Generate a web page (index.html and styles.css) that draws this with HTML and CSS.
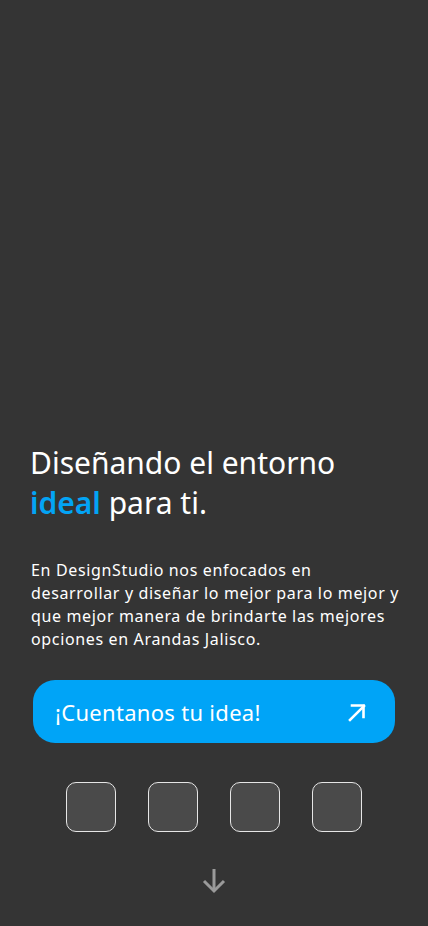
FILE: index.html
```html
<!DOCTYPE html>
<html lang="es">
<head>
<meta charset="utf-8">
<title>DesignStudio</title>
<link rel="stylesheet" href="styles.css">
</head>
<body>
<main class="hero">
  <h1 class="title">Diseñando el entorno<br><span class="accent">ideal</span> para ti.</h1>
  <p class="lead">En DesignStudio nos enfocados en desarrollar y diseñar lo mejor para lo mejor y que mejor manera de brindarte las mejores opciones en Arandas Jalisco.</p>
  <a class="cta" href="#">
    <span>¡Cuentanos tu idea!</span>
    <svg class="cta-icon" width="20" height="20" viewBox="0 0 20 20" fill="none" stroke="#fff" stroke-width="2.6" stroke-linecap="square">
      <path d="M3 18 L17 4"/>
      <path d="M5 3.5 H16.5 V15"/>
    </svg>
  </a>
  <div class="tiles">
    <div class="tile"></div>
    <div class="tile"></div>
    <div class="tile"></div>
    <div class="tile"></div>
  </div>
  <div class="scroll">
    <svg width="24" height="26" viewBox="0 0 24 26" fill="none" stroke="#9a9a9a" stroke-width="3">
      <path d="M12 1 V23"/>
      <path d="M2 13 L12 23 L22 13"/>
    </svg>
  </div>
</main>
</body>
</html>
```
FILE: styles.css
```css
html, body {
  margin: 0;
  padding: 0;
  background: #343434;
}
body {
  font-family: "Noto Sans", "DejaVu Sans", sans-serif;
  color: #fff;
}
.hero {
  height: 926px;
  box-sizing: border-box;
  display: flex;
  flex-direction: column;
  justify-content: flex-end;
  padding: 0 33px 32px 33px;
}
.title {
  margin: 0 0 0 -3px;
  font-size: 30px;
  font-weight: 400;
  line-height: 40px;
  letter-spacing: 0;
}
.accent {
  color: #03a4f5;
  font-weight: 600;
}
.lead {
  margin: 36px -6px 0 -2px;
  font-size: 16px;
  line-height: 23px;
  letter-spacing: 0.65px;
}
.cta {
  margin-top: 29px;
  height: 63px;
  border-radius: 22px;
  background: #00a4f7;
  display: flex;
  align-items: center;
  justify-content: space-between;
  padding: 0 28px 0 22px;
  text-decoration: none;
  color: #fff;
  font-size: 22px;
  letter-spacing: 0.3px;
}
.cta-icon {
  display: block;
}
.tiles {
  margin-top: 39px;
  display: flex;
  justify-content: center;
  gap: 32px;
}
.tile {
  width: 48px;
  height: 48px;
  border: 1px solid #e6e6e6;
  border-radius: 10px;
  background: #4a4a4a;
}
.scroll {
  margin-top: 36px;
  display: flex;
  justify-content: center;
}
.scroll svg {
  display: block;
}
```
